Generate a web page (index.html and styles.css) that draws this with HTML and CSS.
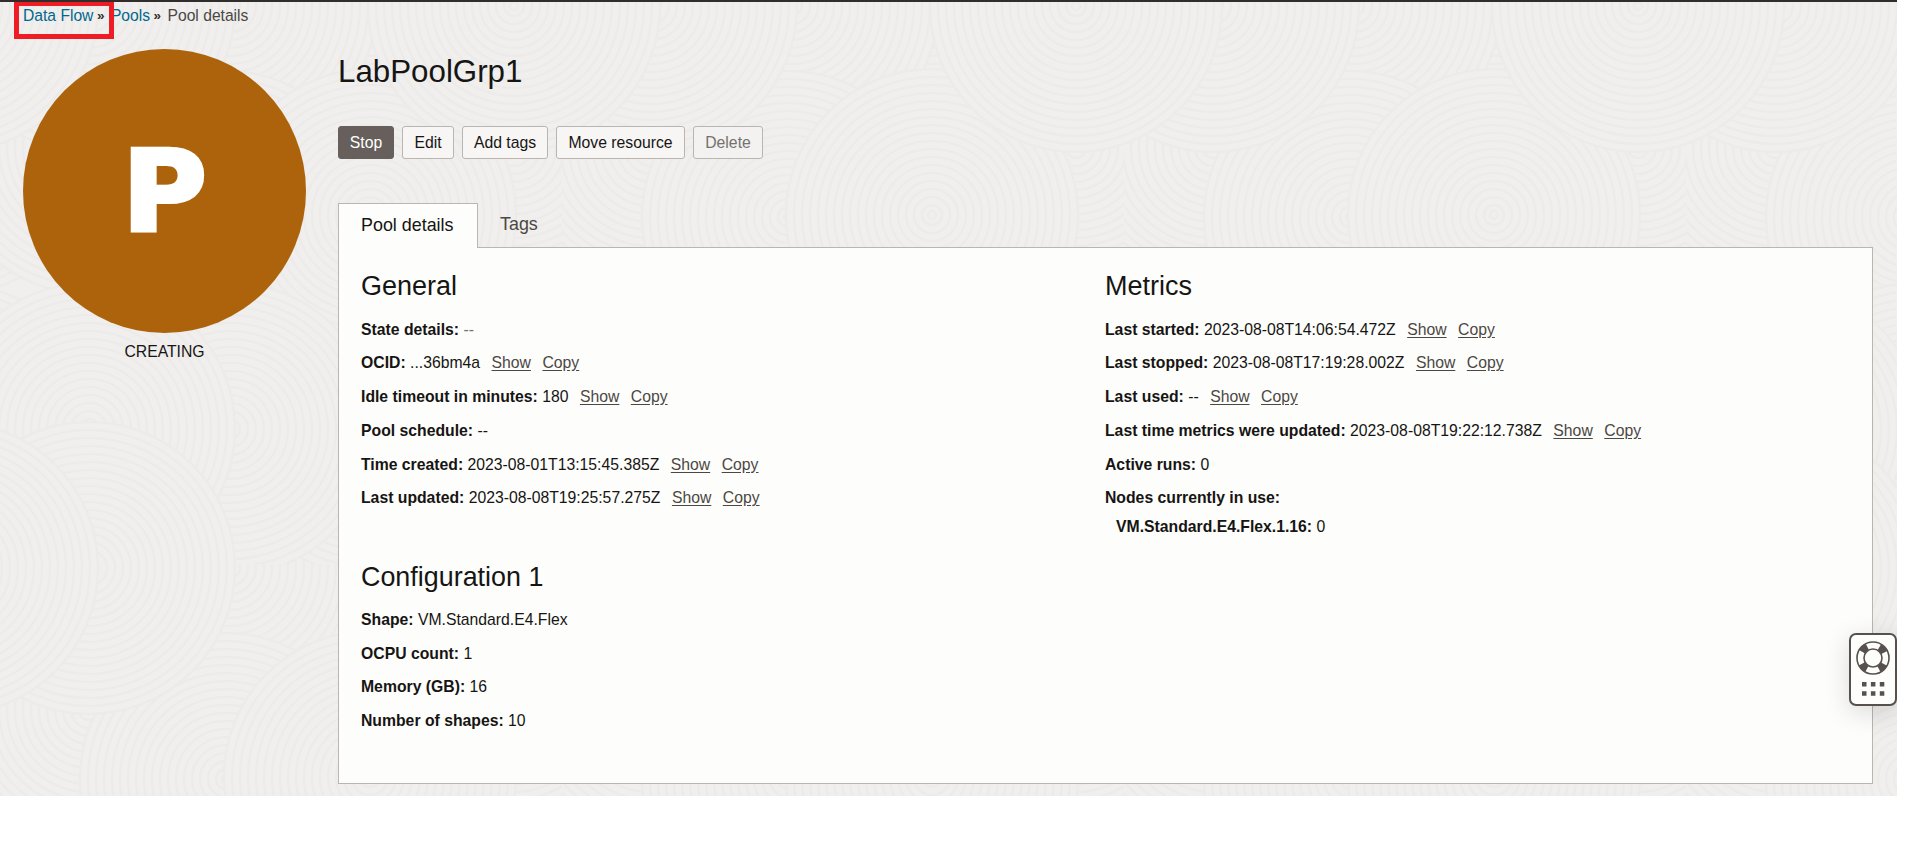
FILE: index.html
```
<!DOCTYPE html>
<html lang="en">
<head>
<meta charset="utf-8">
<title>Pool details</title>
<link rel="stylesheet" href="styles.css">
</head>
<body>
<div class="page">
  <svg class="texture" width="1897" height="794" aria-hidden="true">
    <defs>
      <g id="rings">
        <circle r="146"/><circle r="138"/><circle r="130"/><circle r="122"/><circle r="114"/><circle r="106"/><circle r="98"/><circle r="90"/><circle r="82"/><circle r="74"/><circle r="66"/><circle r="58"/><circle r="50"/><circle r="42"/><circle r="34"/><circle r="26"/><circle r="18"/><circle r="10"/><circle r="4"/>
      </g>
      <pattern id="waves" width="562" height="562" patternUnits="userSpaceOnUse">
        <rect width="562" height="562" fill="#f0efee"/>
        <g class="rings">
          <use href="#rings" x="370" y="4"/><use href="#rings" x="370" y="566"/>
          <use href="#rings" x="230" y="4"/><use href="#rings" x="230" y="566"/>
          <use href="#rings" x="514" y="146"/><use href="#rings" x="-48" y="146"/>
          <use href="#rings" x="89" y="146"/>
          <use href="#rings" x="514" y="427"/><use href="#rings" x="-48" y="427"/>
          <use href="#rings" x="370" y="427"/>
          <use href="#rings" x="226" y="215"/>
          <use href="#rings" x="370" y="213"/>
          <use href="#rings" x="230" y="427"/>
          <use href="#rings" x="89" y="427"/>
          <use href="#rings" x="89" y="4"/><use href="#rings" x="89" y="566"/>
          <use href="#rings" x="514" y="4"/><use href="#rings" x="514" y="566"/><use href="#rings" x="-48" y="4"/><use href="#rings" x="-48" y="566"/>
        </g>
      </pattern>
    </defs>
    <rect width="1897" height="794" fill="url(#waves)"/>
  </svg>

  <nav class="crumbs">
    <a>Data Flow</a><span class="sep">»</span><a>Pools</a><span class="sep">»</span><span>Pool details</span>
    <div class="highlight"></div>
  </nav>

  <div class="layout">
    <aside class="status">
      <div class="avatar"><span class="letter">P</span></div>
      <div class="state">CREATING</div>
    </aside>

    <main class="main">
      <h1>LabPoolGrp1</h1>
      <div class="actions">
        <button class="btn primary w-stop">Stop</button>
        <button class="btn w-edit">Edit</button>
        <button class="btn w-tags">Add tags</button>
        <button class="btn w-move">Move resource</button>
        <button class="btn disabled w-delete">Delete</button>
      </div>

      <div class="tabs">
        <div class="tab active">Pool details</div>
        <div class="tab">Tags</div>
      </div>

      <section class="panel">
        <div class="col">
          <h2>General</h2>
          <p><b>State details:</b> <span class="dim">--</span></p>
          <p><b>OCID:</b> ...36bm4a<a>Show</a><a>Copy</a></p>
          <p><b>Idle timeout in minutes:</b> 180<a>Show</a><a>Copy</a></p>
          <p><b>Pool schedule:</b> --</p>
          <p><b>Time created:</b> 2023-08-01T13:15:45.385Z<a>Show</a><a>Copy</a></p>
          <p><b>Last updated:</b> 2023-08-08T19:25:57.275Z<a>Show</a><a>Copy</a></p>
          <h2 class="second">Configuration 1</h2>
          <p><b>Shape:</b> VM.Standard.E4.Flex</p>
          <p><b>OCPU count:</b> 1</p>
          <p><b>Memory (GB):</b> 16</p>
          <p><b>Number of shapes:</b> 10</p>
        </div>
        <div class="col">
          <h2>Metrics</h2>
          <p><b>Last started:</b> 2023-08-08T14:06:54.472Z<a>Show</a><a>Copy</a></p>
          <p><b>Last stopped:</b> 2023-08-08T17:19:28.002Z<a>Show</a><a>Copy</a></p>
          <p><b>Last used:</b> --<a>Show</a><a>Copy</a></p>
          <p><b>Last time metrics were updated:</b> 2023-08-08T19:22:12.738Z<a>Show</a><a>Copy</a></p>
          <p><b>Active runs:</b> 0</p>
          <p><b>Nodes currently in use:</b></p>
          <p class="sub"><b>VM.Standard.E4.Flex.1.16:</b> 0</p>
        </div>
      </section>
    </main>
  </div>

  <div class="help">
    <svg width="34" height="34" viewBox="-17 -17 34 34">
      <g fill="none" stroke="#56514d">
        <circle r="12.6" stroke-width="6.8" stroke-dasharray="7.2 12.592" stroke-dashoffset="-6.296"/>
        <circle r="16" stroke-width="1.6"/>
        <circle r="9" stroke-width="1.6"/>
      </g>
    </svg>
    <svg class="dots" width="23" height="14" viewBox="0 0 23 14" fill="#56514d">
      <path d="M0 0h4.5v4.5H0zM8.9 0h4.5v4.5H8.9zM17.8 0h4.5v4.5h-4.5zM0 9.2h4.5v4.5H0zM8.9 9.2h4.5v4.5H8.9zM17.8 9.2h4.5v4.5h-4.5z"/>
    </svg>
  </div>
</div>
</body>
</html>
```

FILE: styles.css
```
* { box-sizing: border-box; }
body {
  margin: 0;
  background: #fff;
  color: #161513;
  font: 15.76px/20px "Liberation Sans", Arial, sans-serif;
  overflow: hidden;
}
.page {
  position: relative;
  width: 1897px;
  height: 796px;
  border-top: 2px solid #312d2a;
  background: #f0efee;
  overflow: hidden;
}
.texture { position: absolute; left: 0; top: 0; }
.rings { fill: #f0efee; stroke: #ecebea; stroke-width: 2.2; }

.crumbs {
  position: relative;
  display: flex;
  height: 28px;
  padding: 4px 0 0 23px;
  color: #4b4743;
  font-size: 15.65px;
}
.crumbs a { color: #00688c; }
.sep { font-weight: bold; font-size: 13.5px; width: 8px; margin: 0 6px 0 3.5px; color: #312d2a; }
.highlight {
  position: absolute;
  left: 14px;
  top: -1px;
  width: 100px;
  height: 38px;
  border: 5px solid #ee1c25;
}

.layout { position: relative; display: flex; padding-left: 23px; }
.status { width: 283px; padding-top: 19px; text-align: center; }
.avatar {
  display: flex;
  align-items: center;
  justify-content: center;
  height: 284px;
  border-radius: 50%;
  background: #ac630c;
  color: #fff;
}
.letter {
  font: bold 112px/1 "DejaVu Sans", sans-serif;
  -webkit-text-stroke: 4px #fff;
  transform: translateX(0.5px) scaleX(1.03);
}
.state { padding-top: 9px; }

.main { width: 1535px; margin-left: 32px; }
h1 { margin: 22px 0 0; font-size: 31.3px; line-height: 40px; font-weight: normal; }
.actions { display: flex; gap: 8px; margin-top: 34px; }
.btn {
  height: 33px;
  padding: 0;
  border: 1px solid #bab5ae;
  border-radius: 3px;
  background: #f7f6f5;
  color: #161513;
  font: inherit;
}
.primary { background: #665f5b; border-color: #665f5b; color: #fff; }
.disabled { background: #f3f2f1; color: #75716d; }
.w-stop { width: 56px; }
.w-edit { width: 52px; }
.w-tags { width: 86px; }
.w-move { width: 129px; }
.w-delete { width: 70px; }

.tabs { display: flex; margin-top: 44px; height: 44px; font-size: 17.9px; }
.tab { padding: 0 22px; height: 44px; line-height: 42px; color: #4b4743; }
.tab.active {
  position: relative;
  width: 140px;
  height: 45px;
  line-height: 43px;
  border: 1px solid #bab5ae;
  border-bottom: 0;
  background: #fdfdfb;
  color: #161513;
}
.panel {
  display: grid;
  grid-template-columns: 744px 1fr;
  height: 537px;
  padding: 18px 22px;
  border: 1px solid #bab5ae;
  background: #fdfdfb;
}
h2 { margin: 0 0 6.5px; font-size: 27px; line-height: 40px; font-weight: normal; }
h2.second { margin: 41.2px 0 3.7px; line-height: 43px; font-size: 26.9px; }
p { margin: 0; line-height: 33.75px; }
p a { margin-left: 11.5px; color: #4b4743; text-decoration: underline; text-underline-offset: 2px; }
.dim { color: #75716d; }
.sub { padding-left: 11px; line-height: 24px; }

.help {
  position: absolute;
  left: 1849px;
  top: 631px;
  width: 48px;
  height: 73px;
  padding-top: 6px;
  display: flex;
  flex-direction: column;
  align-items: center;
  border: 2px solid #56514d;
  border-radius: 7px;
  background: #fdfdfb;
  box-shadow: 0 6px 26px rgba(0, 0, 0, .14);
}
.help svg { flex: none; }
.dots { margin-top: 7px; }
```
